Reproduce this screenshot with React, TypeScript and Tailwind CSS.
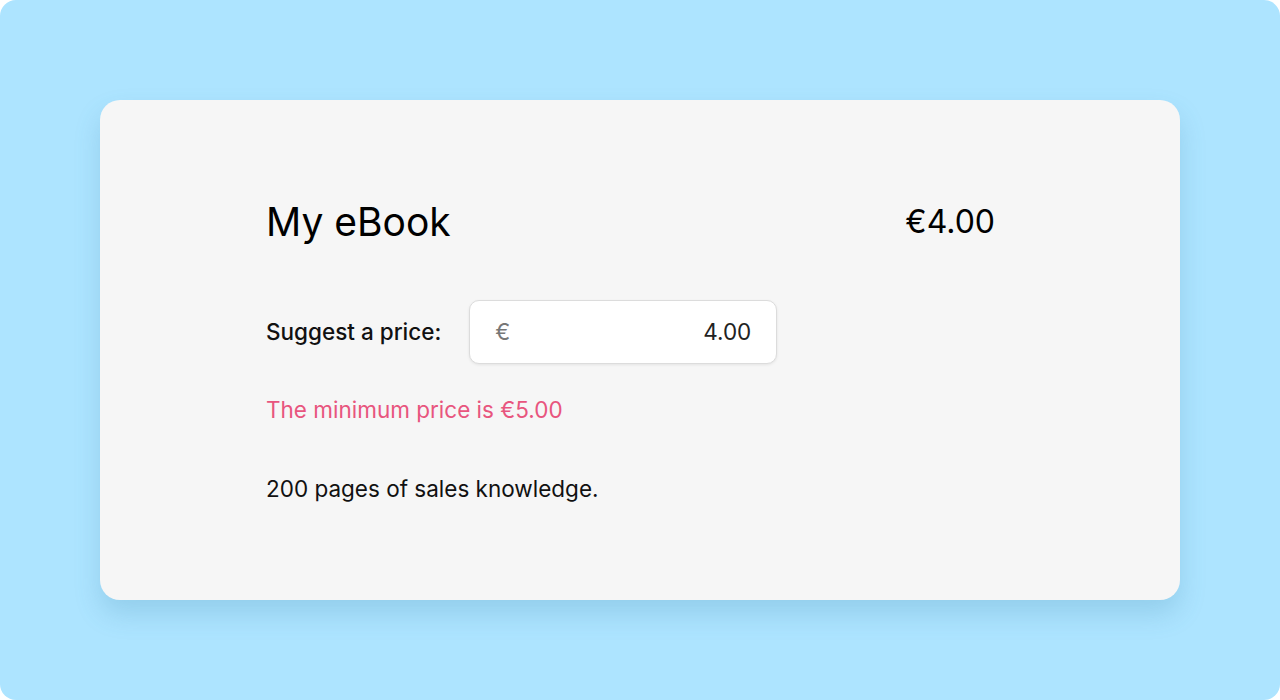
import React from 'react'

export default function App() {
  const [price, setPrice] = React.useState('4.00')

  return (
    <div
      className="h-[700px] w-[1280px] bg-white"
      style={{ fontFamily: 'Inter, "Noto Sans", sans-serif' }}
    >
      <div className="flex h-full w-full items-start justify-center rounded-2xl bg-[#ade4ff] pt-[100px]">
        <div className="h-[500px] w-[1080px] rounded-[20px] bg-[#f6f6f6] pl-[166px] pr-[185px] pt-[98px] shadow-[0_14px_26px_rgba(60,130,170,0.22)]">
          <div className="flex items-center justify-between">
            <h1 className="text-[39px] font-normal leading-[48px] text-black">My eBook</h1>
            <div className="text-[32px] leading-[48px] text-black">€4.00</div>
          </div>

          <div className="mt-[54px] flex items-center gap-[28px]">
            <label className="text-[22.5px] font-medium leading-[32px] text-[#111]">Suggest a price:</label>
            <div className="flex h-[64px] w-[308px] items-center rounded-[10px] border border-[#dcdcdc] bg-white px-[25px] shadow-[0_1px_3px_rgba(0,0,0,0.08)]">
              <span className="text-[22.5px] text-[#777]">€</span>
              <input
                className="ml-2 w-full bg-transparent text-right text-[22.5px] text-[#222] outline-none"
                value={price}
                onChange={(e) => setPrice(e.target.value)}
              />
            </div>
          </div>

          <p className="mt-[30px] text-[22.5px] leading-[32px] text-[#e8557e]">The minimum price is €5.00</p>

          <p className="mt-[47px] text-[22.5px] leading-[32px] text-[#111]">200 pages of sales knowledge.</p>
        </div>
      </div>
    </div>
  )
}
